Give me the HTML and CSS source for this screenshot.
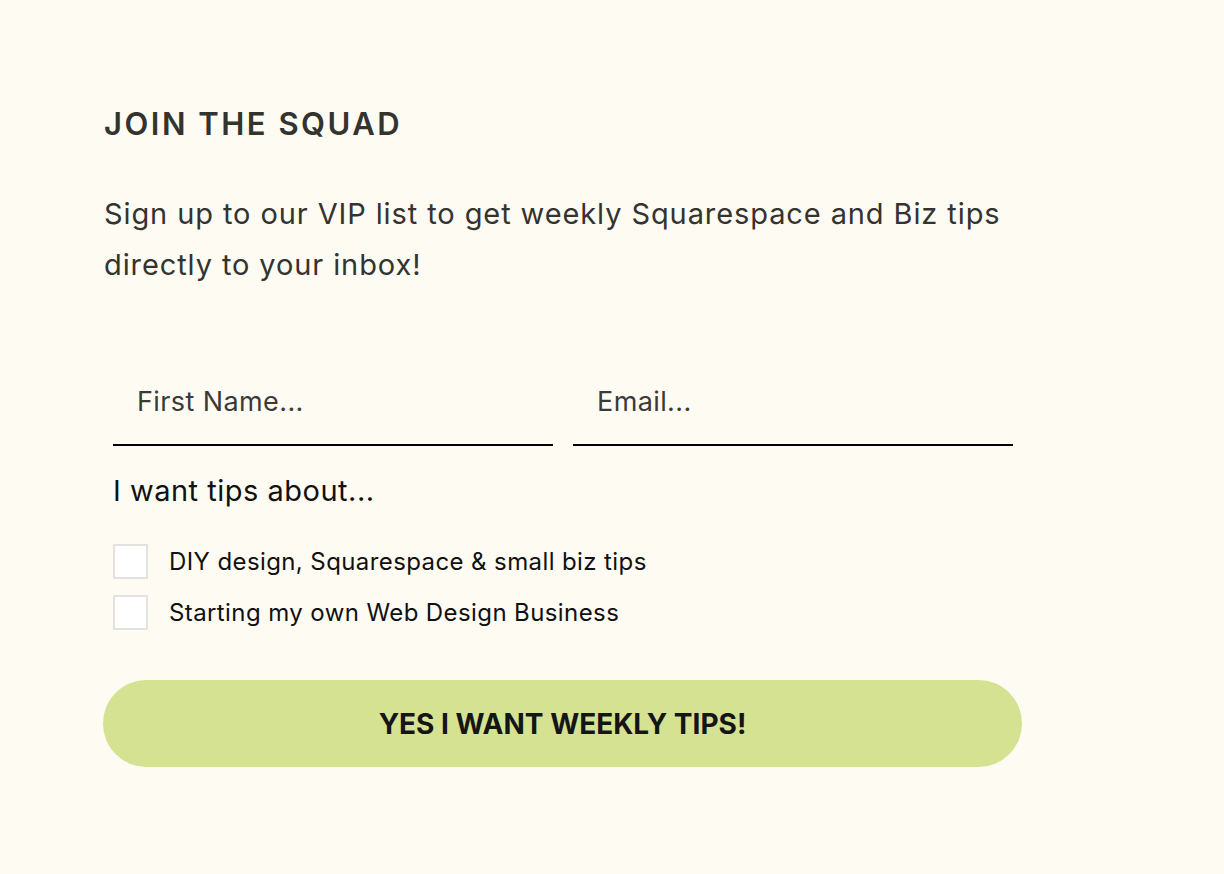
FILE: index.html
```html
<!DOCTYPE html>
<html lang="en">
<head>
    <meta charset="UTF-8">
    <meta name="viewport" content="width=device-width, initial-scale=1.0">
    <title>Join the Squad</title>
    <link rel="stylesheet" href="styles.css">
</head>
<body>
    <div class="container">
        <h2 class="title">JOIN THE SQUAD</h2>
        <p class="intro">Sign up to our VIP list to get weekly Squarespace and Biz tips directly to your inbox!</p>

        <form class="signup">
            <div class="fields">
                <input type="text" placeholder="First Name...">
                <input type="email" placeholder="Email...">
            </div>
            <p class="tips-label">I want tips about...</p>
            <label class="check"><span class="box"></span>DIY design, Squarespace &amp; small biz tips</label>
            <label class="check"><span class="box"></span>Starting my own Web Design Business</label>
            <button type="button">YES I WANT WEEKLY TIPS!</button>
        </form>
    </div>
</body>
</html>
```

FILE: styles.css
```css
body {
    margin: 0;
    background: #fefbf3;
    font-family: Inter, "Open Sans", sans-serif;
    color: #333330;
}
.container {
    width: 920px;
    padding: 104px 0 0 104px;
}
.title {
    margin: 0;
    font-size: 31px;
    font-weight: 600;
    letter-spacing: 2.5px;
    line-height: 40px;
}
.intro {
    max-width: 910px;
    margin: 44px 0 0;
    font-size: 29px;
    letter-spacing: 0.9px;
    line-height: 51px;
}
.signup {
    margin-top: 68px;
    padding-left: 9px;
}
.fields {
    display: flex;
    gap: 20px;
}
.fields input {
    box-sizing: border-box;
    width: 440px;
    height: 88px;
    padding: 0 24px;
    border: none;
    border-bottom: 2px solid #000;
    background: transparent;
    font-family: inherit;
    font-size: 27px;
    letter-spacing: 0.4px;
    color: #333;
    outline: none;
}
.fields input::placeholder {
    color: #3a3a38;
}
.tips-label {
    margin: 27px 0 36px;
    font-size: 29px;
    letter-spacing: 0.5px;
    color: #111;
}
.check {
    display: flex;
    align-items: center;
    gap: 21px;
    margin-bottom: 16px;
    font-size: 24px;
    letter-spacing: 0.4px;
    color: #111;
}
.box {
    width: 31px;
    height: 31px;
    border: 2px solid #e3e2df;
    background: #fff;
}
button {
    display: block;
    width: 919px;
    height: 87px;
    margin: 50px 0 0 -10px;
    border: none;
    border-radius: 44px;
    background: #d5e291;
    font-family: inherit;
    font-size: 28px;
    font-weight: 700;
    color: #151515;
    cursor: pointer;
}
```
